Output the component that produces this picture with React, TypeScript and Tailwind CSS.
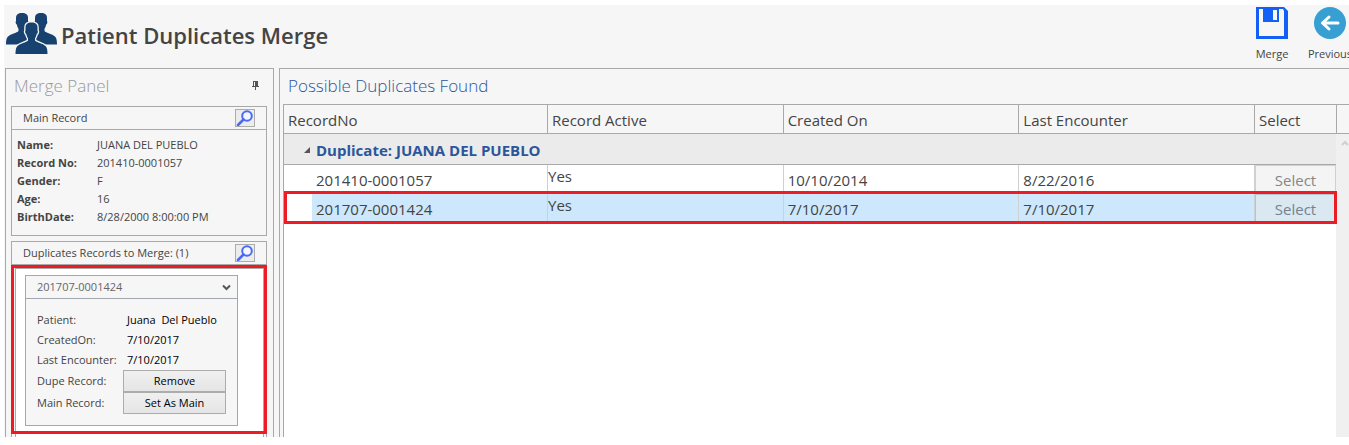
import React from "react";

const mainRecord = [
  ["Name:", "JUANA DEL PUEBLO"],
  ["Record No:", "201410-0001057"],
  ["Gender:", "F"],
  ["Age:", "16"],
  ["BirthDate:", "8/28/2000 8:00:00 PM"],
];

const duplicateFields = [
  ["Patient:", "Juana\u00a0 Del Pueblo"],
  ["CreatedOn:", "7/10/2017"],
  ["Last Encounter:", "7/10/2017"],
];

const rows = [
  { recordNo: "201410-0001057", created: "10/10/2014", last: "8/22/2016", selected: false },
  { recordNo: "201707-0001424", created: "7/10/2017", last: "7/10/2017", selected: true },
];

const personPath =
  "M0 0C-4 0-6 1.800-6 5v3c-.8.8-.2 3.200.8 3.600c.4 2 1 3.200 1.700 4.200v2.200C-5 20-11.500 21-14 23.500c-1.500 1.500-2 4-2 8H16c0-4-.5-6.500-2-8C11.500 21 5 20 3.500 18v-2.200c.7-1 1.300-2.200 1.700-4.200c1-.4 1.600-2.800.8-3.600V5C6 1.800 4 0 0 0Z";

function PeopleIcon() {
  return (
    <svg width="52" height="42" viewBox="0 0 52 42" fill="#17426f" aria-hidden="true">
      <path d={personPath} transform="translate(16 0)" />
      <path d={personPath} transform="translate(35 0)" />
      <path d={personPath} transform="translate(25.500 9.500)" stroke="#f6f6f6" strokeWidth="2.600" paintOrder="stroke" />
    </svg>
  );
}

function SaveIcon() {
  return (
    <svg width="32" height="32" viewBox="0 0 32 32" aria-hidden="true">
      <path d="M0 0h28l4 4v28H0Z" fill="#1260f5" />
      <path d="M3 2h24l1 2v25H3Z" fill="#f6f6f6" />
      <path d="M7 0h16v15H7Z" fill="#1260f5" />
      <path d="M17 3h4v10h-4Z" fill="#f6f6f6" />
    </svg>
  );
}

function BackIcon() {
  return (
    <svg width="32" height="32" viewBox="0 0 32 32" aria-hidden="true">
      <circle cx="16" cy="16" r="16" fill="#379fd1" />
      <path d="M24 16H9M15 10L8.500 16l6.500 6" fill="none" stroke="#fff" strokeWidth="3" strokeLinecap="round" strokeLinejoin="round" />
    </svg>
  );
}

function SearchButton({ label }: { label: string }) {
  return (
    <button type="button" aria-label={label} className="flex h-[18px] w-5 items-center justify-center border border-[#acacac] bg-[#ececec]">
      <svg width="18" height="16" viewBox="0 0 18 16" aria-hidden="true">
        <circle cx="11" cy="6" r="4.800" fill="#f4f6ff" stroke="#4a6af5" strokeWidth="2" />
        <path d="M7.500 9.500L2 15" stroke="#4a6af5" strokeWidth="2.600" strokeLinecap="round" />
      </svg>
    </button>
  );
}

function PanelBar({ title }: { title: string }) {
  return (
    <div className="flex h-[23px] items-center justify-between border-b border-[#a9a9a9] px-[11px]">
      <h3>{title}</h3>
      <SearchButton label={`Search ${title}`} />
    </div>
  );
}

function ActionRow({ label, action }: { label: string; action: string }) {
  return (
    <div className="flex h-[22px] items-center">
      <span className="w-[86px]">{label}</span>
      <button type="button" className="h-[22px] w-[103px] border border-[#acacac] bg-linear-to-b from-[#f0f0f0] to-[#e5e5e5] text-black">
        {action}
      </button>
    </div>
  );
}

function MergePanel() {
  return (
    <aside className="flex w-[269px] shrink-0 flex-col border border-b-0 border-[#a9a9a9] pr-[6px] pl-[5px]">
      <div className="flex h-[37px] items-center justify-between pr-2 pb-1 pl-[3px]">
        <h2 className="text-[17px] font-light text-[#999]">Merge Panel</h2>
        <button type="button" aria-label="Pin panel">
          <svg width="7" height="9" viewBox="0 0 7 9" aria-hidden="true">
            <path d="M1 0h5v5h1v1H4v3H3V6H0V5h1ZM2 1v4h1V1Z" fill="#555" fillRule="evenodd" />
          </svg>
        </button>
      </div>
      <section className="mb-[5px] border border-[#a9a9a9] text-[11px]">
        <PanelBar title="Main Record" />
        <dl className="px-[5px] pt-[6px] pb-[9px]">
          {mainRecord.map(([label, value]) => (
            <div key={label} className="flex h-[18px] items-center">
              <dt className="w-20 font-bold">{label}</dt>
              <dd>{value}</dd>
            </div>
          ))}
        </dl>
      </section>
      <section className="flex flex-1 flex-col border border-b-0 border-[#a9a9a9] text-[11px]">
        <PanelBar title="Duplicates Records to Merge: (1)" />
        <div className="relative flex flex-1 flex-col pt-[3px] pr-[2px] pl-[3px]">
          <div className="flex-1 border border-b-0 border-[#a9a9a9] bg-white px-[9px] pt-[6px] pb-[11px]">
            <article className="w-[213px] border border-[#a3a7b0] bg-[#f6f6f6]">
              <button type="button" className="flex h-[23px] w-full items-center justify-between border-b border-[#a3a7b0] pr-[6px] pl-[11px] text-[#666]">
                201707-0001424
                <svg width="9" height="7" viewBox="0 0 9 7" aria-hidden="true">
                  <path d="M1 1.500L4.500 5L8 1.500" fill="none" stroke="#555" strokeWidth="2" />
                </svg>
              </button>
              <div className="pt-[11px] pb-[11px] pl-[11px]">
                {duplicateFields.map(([label, value]) => (
                  <div key={label} className="flex h-5 items-center">
                    <span className="w-[90px]">{label}</span>
                    <span className="text-black">{value}</span>
                  </div>
                ))}
                <ActionRow label="Dupe Record:" action="Remove" />
                <ActionRow label="Main Record:" action="Set As Main" />
              </div>
            </article>
          </div>
          <div className="pointer-events-none absolute inset-x-[-1px] top-0 bottom-[3px] border-3 border-[#ed1c24]" />
        </div>
      </section>
    </aside>
  );
}

function DuplicatesTable() {
  const head = "border-r border-b border-[#a9a9a9] p-0 pt-0.5 pl-1 text-left font-normal";
  return (
    <table className="w-full table-fixed border-separate border-spacing-0 text-[15px]">
      <colgroup>
        <col className="w-[264px]" />
        <col />
        <col />
        <col />
        <col className="w-[81px]" />
      </colgroup>
      <thead>
        <tr className="h-[29px] bg-[#f6f6f6]">
          <th className={head}>RecordNo</th>
          <th className={head}>Record Active</th>
          <th className={head}>Created On</th>
          <th className={head}>Last Encounter</th>
          <th className="border-b border-[#a9a9a9] p-0 pt-0.5 pl-1 text-left font-normal">Select</th>
        </tr>
      </thead>
      <tbody>
        <tr className="h-[31px] bg-[#ebebeb]">
          <th colSpan={5} className="border-b border-[#a9a9a9] p-0 pt-0.5 text-left text-[#2b579a]">
            <button type="button" className="flex items-center pl-5 text-[15px] font-bold">
              <svg width="6" height="6" viewBox="0 0 6 6" className="mr-[6px]" aria-hidden="true">
                <path d="M6 0v6H0Z" fill="#555" />
              </svg>
              Duplicate: JUANA DEL PUEBLO
            </button>
          </th>
        </tr>
        {rows.map((row) => (
          <tr key={row.recordNo} className="relative h-[29px]">
            <td className="border-r border-[#d0d0d0] p-0 pl-7">
              <div className={row.selected ? "h-[29px] bg-[#cde8fc] pt-1 pl-1 leading-[22px]" : "h-[29px] pt-1 pl-1 leading-[22px]"}>
                {row.recordNo}
              </div>
              {row.selected && (
                <div className="pointer-events-none absolute -top-[3px] -right-px -bottom-px left-0 z-10 border-3 border-[#ed1c24]" />
              )}
            </td>
            {["Yes", row.created, row.last].map((value, i) => (
              <td
                key={i}
                className={
                  row.selected
                    ? "border-r border-[#d0d0d0] bg-[#cde8fc] p-0 align-top"
                    : "border-r border-[#d0d0d0] p-0 align-top"
                }
              >
                <div className={i === 0 ? "leading-[22px]" : "pt-1 pl-1 leading-[22px]"}>{value}</div>
              </td>
            ))}
            <td className="p-0">
              <button
                type="button"
                className={
                  row.selected
                    ? "block h-[29px] w-full border border-[#b5c4d0] bg-[#dae8f1] pt-0.5 text-[#74828e]"
                    : "block h-[29px] w-full border border-[#d0d0d0] bg-[#f4f4f4] pt-0.5 text-[#868686]"
                }
              >
                Select
              </button>
            </td>
          </tr>
        ))}
      </tbody>
    </table>
  );
}

export default function App() {
  return (
    <div className="flex min-h-screen flex-col overflow-hidden bg-white pt-[5px] pb-2 pl-1 font-['Open_Sans','Noto_Sans',sans-serif] text-[#444]">
      <div className="flex flex-1 flex-col bg-[#f6f6f6]">
        <header className="flex h-[63px] justify-between">
          <div className="flex items-start pt-2 pl-[2px]">
            <PeopleIcon />
            <h1 className="pt-[6px] pl-[3px] text-[22px] leading-8 font-semibold">Patient Duplicates Merge</h1>
          </div>
          <nav className="-mr-[5px] flex gap-[10px] pt-[2px] text-[11px]">
            <button type="button" className="flex w-12 flex-col items-center">
              <SaveIcon />
              <span className="mt-[7px] leading-4">Merge</span>
            </button>
            <button type="button" className="flex w-12 flex-col items-center">
              <BackIcon />
              <span className="mt-[7px] leading-4">Previous</span>
            </button>
          </nav>
        </header>
        <main className="flex flex-1 gap-[5px] pl-px">
          <MergePanel />
          <section className="flex min-w-0 flex-1 flex-col border-t border-l border-[#a9a9a9] pl-[3px]">
            <h2 className="h-[35px] pl-[5px] text-[17px] leading-[34px] font-light text-[#2b579a]">Possible Duplicates Found</h2>
            <div className="flex flex-1 border-t border-l border-[#a9a9a9] bg-white">
              <div className="min-w-0 flex-1">
                <DuplicatesTable />
              </div>
              <div className="flex w-[13px] shrink-0 flex-col bg-[#f0f0f0]">
                <div className="h-[29px] border-b border-l border-[#a9a9a9] bg-[#f6f6f6]" />
                <svg width="8" height="6" viewBox="0 0 8 6" className="mt-[6px] ml-[5px]" aria-hidden="true">
                  <path d="M1 5L4 2L7 5" fill="none" stroke="#d0d0d0" strokeWidth="2" />
                </svg>
              </div>
            </div>
          </section>
        </main>
      </div>
    </div>
  );
}
